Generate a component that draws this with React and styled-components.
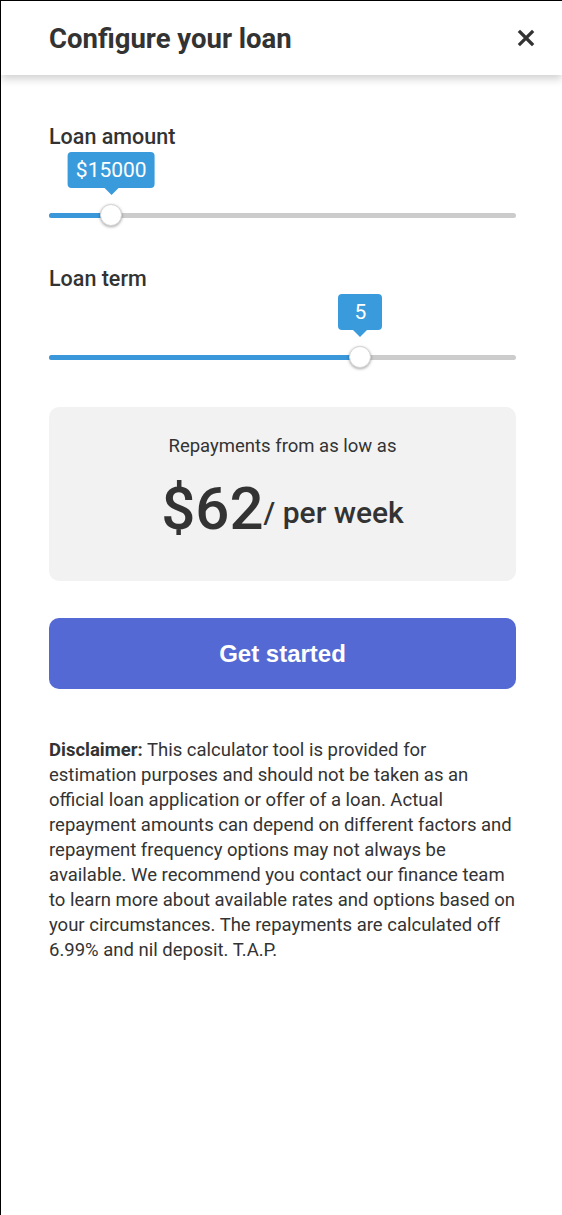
import React from 'react'
import styled, { createGlobalStyle } from 'styled-components'

const GlobalStyle = createGlobalStyle`
  html, body {
    margin: 0;
    padding: 0;
    background: #ffffff;
  }
  body {
    font-family: Roboto, "Liberation Sans", sans-serif;
    color: #333333;
  }
`

const Frame = styled.div`
  min-height: 1215px;
  box-sizing: border-box;
  border-top: 1px solid #000;
  border-left: 1px solid #000;
  background: #fff;
`

const Header = styled.header`
  height: 74px;
  display: flex;
  align-items: center;
  justify-content: space-between;
  padding: 0 26px 0 48px;
  background: #fff;
  box-shadow: 0 4px 8px rgba(0, 0, 0, 0.18);
`

const Title = styled.h1`
  margin: 0;
  font-size: 27.5px;
  font-weight: 700;
  color: #333;
`

const Close = styled.button`
  border: 0;
  background: none;
  padding: 0;
  width: 20px;
  height: 20px;
  display: flex;
  align-items: center;
  justify-content: center;
  cursor: pointer;
`

const Body = styled.main`
  display: flex;
  flex-direction: column;
  padding: 50px 46px 40px 48px;
`

const Field = styled.div`
  & + & {
    margin-top: 43px;
  }
`

const Label = styled.div`
  font-size: 21.5px;
  font-weight: 500;
  line-height: 24px;
  color: #333;
`

const SliderWrap = styled.div`
  position: relative;
  height: 18px;
  margin-top: 57px;
  display: flex;
  align-items: center;
`

const Track = styled.div`
  position: relative;
  width: 100%;
  height: 5px;
  border-radius: 3px;
  background: #cccccc;
`

const Fill = styled.div`
  height: 100%;
  border-radius: 3px;
  background: #3a97d9;
`

const Thumb = styled.div`
  position: absolute;
  top: 50%;
  width: 22px;
  height: 22px;
  margin-left: -11px;
  margin-top: -11px;
  border-radius: 50%;
  background: #fff;
  border: 1px solid #d6d6d6;
  box-sizing: border-box;
  box-shadow: 0 1px 3px rgba(0, 0, 0, 0.35);
`

const Bubble = styled.div`
  position: absolute;
  bottom: 37px;
  left: 50%;
  transform: translateX(-50%);
  background: #3a9bdc;
  color: #fff;
  font-size: 21px;
  line-height: 36px;
  padding: 0 8px;
  min-width: 28px;
  text-align: center;
  border-radius: 4px;
  white-space: nowrap;

  &::after {
    content: '';
    position: absolute;
    left: 50%;
    bottom: -7px;
    margin-left: -7px;
    border-left: 7px solid transparent;
    border-right: 7px solid transparent;
    border-top: 7px solid #3a9bdc;
  }
`

const Card = styled.div`
  margin-top: 41px;
  height: 174px;
  box-sizing: border-box;
  padding-top: 27px;
  background: #f2f2f2;
  border-radius: 10px;
  text-align: center;
`

const CardCaption = styled.div`
  font-size: 18.5px;
  line-height: 24px;
  color: #333;
`

const Amount = styled.div`
  margin-top: 15px;
  display: flex;
  align-items: center;
  justify-content: center;
  color: #333;
`

const Big = styled.span`
  font-size: 60px;
  line-height: 72px;
  font-weight: 500;
`

const Per = styled.span`
  font-size: 30px;
  font-weight: 500;
  padding-top: 6px;
`

const Cta = styled.button`
  display: block;
  width: 100%;
  height: 71px;
  margin-top: 37px;
  border: 0;
  border-radius: 10px;
  background: #5469d4;
  color: #fff;
  font-family: "Liberation Sans", Arial, sans-serif;
  font-weight: 700;
  font-size: 24px;
  cursor: pointer;
`

const Disclaimer = styled.p`
  margin: 49px 0 0;
  font-size: 18.5px;
  line-height: 25px;
  color: #333;

  strong {
    font-weight: 700;
  }
`

function Slider ({ value, min, max, format }) {
  const pct = ((value - min) / (max - min)) * 100
  return (
    <SliderWrap>
      <Track>
        <Fill style={{ width: pct + '%' }} />
        <Thumb style={{ left: pct + '%' }}>
          <Bubble>{format(value)}</Bubble>
        </Thumb>
      </Track>
    </SliderWrap>
  )
}

export default function App () {
  return (
    <Frame>
      <GlobalStyle />
      <Header>
        <Title>Configure your loan</Title>
        <Close aria-label="Close">
          <svg width="18" height="18" viewBox="0 0 18 18">
            <path d="M3 3 L15 15 M15 3 L3 15" stroke="#333" strokeWidth="3.2" strokeLinecap="square" />
          </svg>
        </Close>
      </Header>
      <Body>
        <Field>
          <Label>Loan amount</Label>
          <Slider value={15000} min={5000} max={80000} format={v => '$' + v} />
        </Field>
        <Field>
          <Label>Loan term</Label>
          <Slider value={5} min={1} max={7} format={v => v} />
        </Field>
        <Card>
          <CardCaption>Repayments from as low as</CardCaption>
          <Amount>
            <Big>$62</Big>
            <Per>/ per week</Per>
          </Amount>
        </Card>
        <Cta>Get started</Cta>
        <Disclaimer>
          <strong>Disclaimer:</strong> This calculator tool is provided for estimation purposes and should not be taken as an official loan application or offer of a loan. Actual repayment amounts can depend on different factors and repayment frequency options may not always be available. We recommend you contact our finance team to learn more about available rates and options based on your circumstances. The repayments are calculated off 6.99% and nil deposit. T.A.P.
        </Disclaimer>
      </Body>
    </Frame>
  )
}
